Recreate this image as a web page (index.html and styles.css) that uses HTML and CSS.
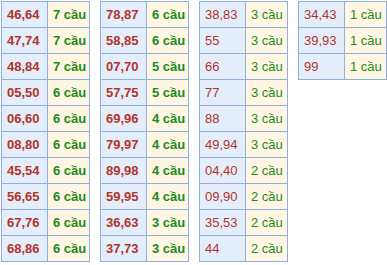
FILE: index.html
```html
<!DOCTYPE html>
<html>
<head>
<meta charset="utf-8">
<link rel="stylesheet" href="styles.css">
</head>
<body>
<div class="wrap">
  <table class="t bold">
    <tr><td class="n">46,64</td><td class="c">7 cầu</td></tr>
    <tr><td class="n">47,74</td><td class="c">7 cầu</td></tr>
    <tr><td class="n">48,84</td><td class="c">7 cầu</td></tr>
    <tr><td class="n">05,50</td><td class="c">6 cầu</td></tr>
    <tr><td class="n">06,60</td><td class="c">6 cầu</td></tr>
    <tr><td class="n">08,80</td><td class="c">6 cầu</td></tr>
    <tr><td class="n">45,54</td><td class="c">6 cầu</td></tr>
    <tr><td class="n">56,65</td><td class="c">6 cầu</td></tr>
    <tr><td class="n">67,76</td><td class="c">6 cầu</td></tr>
    <tr><td class="n">68,86</td><td class="c">6 cầu</td></tr>
  </table>
  <table class="t bold">
    <tr><td class="n">78,87</td><td class="c">6 cầu</td></tr>
    <tr><td class="n">58,85</td><td class="c">6 cầu</td></tr>
    <tr><td class="n">07,70</td><td class="c">5 cầu</td></tr>
    <tr><td class="n">57,75</td><td class="c">5 cầu</td></tr>
    <tr><td class="n">69,96</td><td class="c">4 cầu</td></tr>
    <tr><td class="n">79,97</td><td class="c">4 cầu</td></tr>
    <tr><td class="n">89,98</td><td class="c">4 cầu</td></tr>
    <tr><td class="n">59,95</td><td class="c">4 cầu</td></tr>
    <tr><td class="n">36,63</td><td class="c">3 cầu</td></tr>
    <tr><td class="n">37,73</td><td class="c">3 cầu</td></tr>
  </table>
  <table class="t">
    <tr><td class="n">38,83</td><td class="c">3 cầu</td></tr>
    <tr><td class="n">55</td><td class="c">3 cầu</td></tr>
    <tr><td class="n">66</td><td class="c">3 cầu</td></tr>
    <tr><td class="n">77</td><td class="c">3 cầu</td></tr>
    <tr><td class="n">88</td><td class="c">3 cầu</td></tr>
    <tr><td class="n">49,94</td><td class="c">3 cầu</td></tr>
    <tr><td class="n">04,40</td><td class="c">2 cầu</td></tr>
    <tr><td class="n">09,90</td><td class="c">2 cầu</td></tr>
    <tr><td class="n">35,53</td><td class="c">2 cầu</td></tr>
    <tr><td class="n">44</td><td class="c">2 cầu</td></tr>
  </table>
  <table class="t">
    <tr><td class="n">34,43</td><td class="c">1 cầu</td></tr>
    <tr><td class="n">39,93</td><td class="c">1 cầu</td></tr>
    <tr><td class="n">99</td><td class="c">1 cầu</td></tr>
  </table>
</div>
</body>
</html>
```
FILE: styles.css
```css
html, body {
  margin: 0;
  padding: 0;
  background: #ffffff;
}
body {
  font-family: "Liberation Sans", Arial, sans-serif;
  font-size: 13px;
}
.wrap {
  display: flex;
  align-items: flex-start;
  gap: 10px;
  padding: 1px 0 0 1px;
}
.t {
  border-collapse: collapse;
  width: 89px;
}
.t td {
  border: 1px solid #8fb0dd;
  height: 26px;
  padding: 0 0 0 5px;
  box-sizing: border-box;
  white-space: nowrap;
}
.t .n {
  width: 46px;
  background: #e4eefb;
  color: #b2342a;
}
.t .c {
  background: #fff7e3;
  color: #1d8a1d;
}
.bold td {
  font-weight: bold;
}
```
